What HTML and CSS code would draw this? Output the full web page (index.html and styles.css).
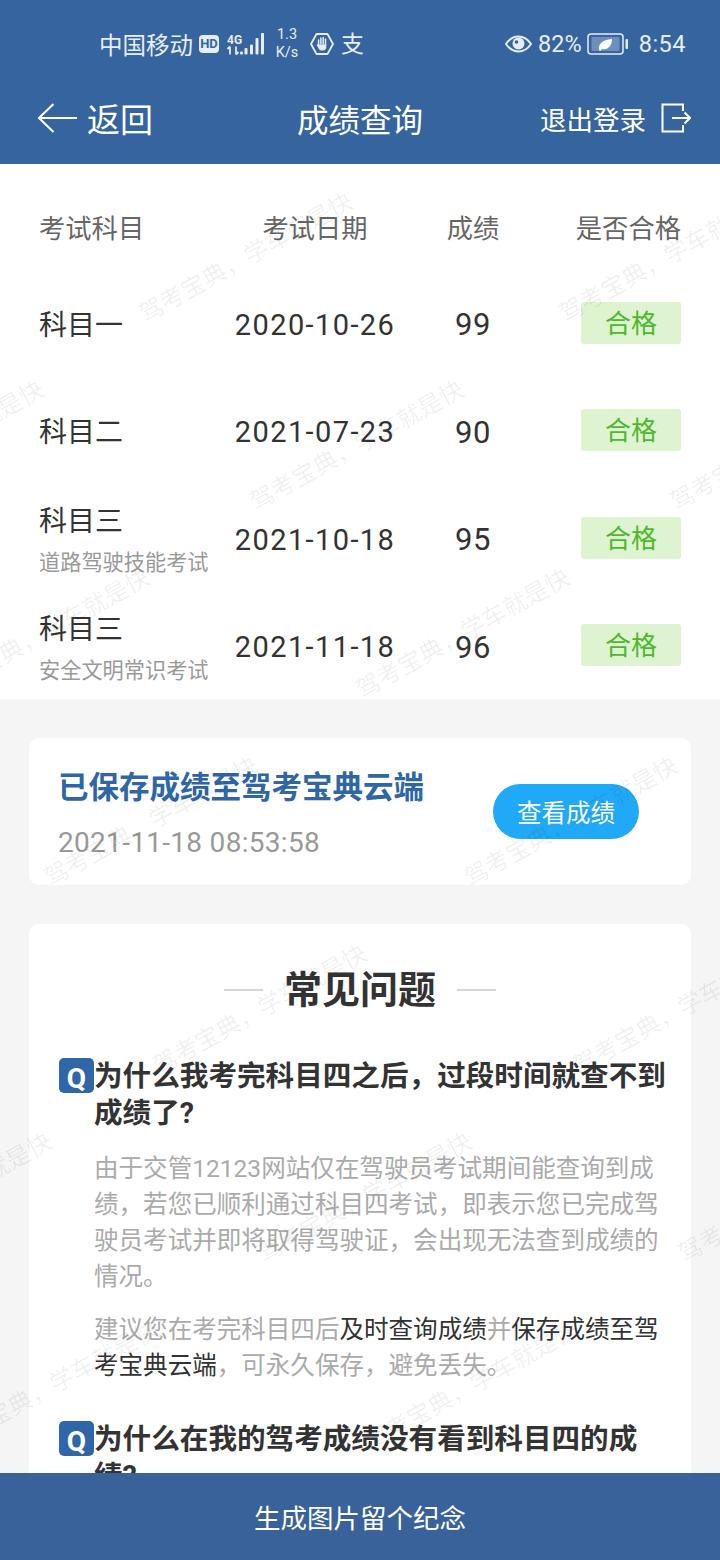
FILE: index.html
```html
<!DOCTYPE html>
<html lang="zh-CN">
<head>
    <meta charset="UTF-8">
    <title>成绩查询</title>
    <link rel="stylesheet" href="styles.css">
</head>
<body>
    <header class="top">
        <div class="status">
            <div class="status-left">
                <span class="carrier">中国移动</span>
                <span class="hd">HD</span>
                <svg class="signal" width="40" height="24" viewBox="0 0 40 24">
                    <text x="1" y="11.500" class="signal-text">4G</text>
                    <path d="M4 14.500v8M4 14.500l-2.500 2.500M10 22.500v-8M10 22.500l2.500-2.500" fill="none" stroke="#e6edf6" stroke-width="1.800"/>
                    <rect x="14" y="19.500" width="3" height="3" rx="1" fill="#e6edf6"/>
                    <rect x="18.500" y="16" width="3" height="6.500" rx="1" fill="#e6edf6"/>
                    <rect x="24" y="12.500" width="3" height="10" rx="1" fill="#e6edf6"/>
                    <rect x="29.500" y="6" width="3" height="16.500" rx="1" fill="#e6edf6"/>
                    <rect x="35" y="1" width="3" height="21.500" rx="1" fill="#e6edf6"/>
                </svg>
                <span class="speed">1.3<br>K/s</span>
                <svg class="hand" width="24" height="24" viewBox="0 0 24 24">
                    <path d="M6.500 2h11L23 12l-5.500 10h-11L1 12z" fill="none" stroke="#e6edf6" stroke-width="1.800" stroke-linejoin="round"/>
                    <path d="M8.600 8V13M10.900 6V12M13.200 5.500V12M15.500 7V13" fill="none" stroke="#e6edf6" stroke-width="1.500" stroke-linecap="round"/>
                    <path d="M7.800 12.500h8.500V15c0 2-1.400 3.500-3.500 3.500h-1.200c-1.600 0-2.500-1-3-2.300l-1.700-2.800c-.4-.9.500-1.500 .9-.9z" fill="#e6edf6"/>
                </svg>
                <span class="alipay">支</span>
            </div>
            <div class="status-right">
                <svg class="eye" width="27" height="18" viewBox="0 0 27 18">
                    <path d="M1 9c3-4.500 7-7.500 12.500-7.500S23 4.500 26 9c-3 4.500-7 7.500-12.500 7.500S4 13.500 1 9z" fill="none" stroke="#e6edf6" stroke-width="2"/>
                    <circle cx="13.500" cy="8.500" r="6" fill="#e6edf6"/>
                    <circle cx="11.500" cy="7" r="1.800" fill="#36649f"/>
                </svg>
                <span class="percent">82%</span>
                <svg class="battery" width="42" height="22" viewBox="0 0 42 22">
                    <rect x="1" y="1" width="35" height="20" rx="3" fill="none" stroke="#e6edf6" stroke-width="1.500"/>
                    <rect x="4.500" y="4" width="28" height="14" rx="1" fill="#6f8fbb"/>
                    <path d="M12 17c-1-6 3-10 13-11 0 7-4 11-10 10l-2 2z" fill="#fff"/>
                    <rect x="38.500" y="6" width="2.500" height="10" rx="1" fill="#e6edf6"/>
                </svg>
                <span class="clock">8:54</span>
            </div>
        </div>
        <nav class="nav">
            <div class="nav-back">
                <svg width="39" height="30" viewBox="0 0 39 30">
                    <path d="M15.500 1L1 15l14.500 14M1 15h38" fill="none" stroke="#fff" stroke-width="2"/>
                </svg>
                <span>返回</span>
            </div>
            <h1 class="nav-title">成绩查询</h1>
            <div class="nav-logout">
                <span>退出登录</span>
                <svg width="30" height="30" viewBox="0 0 30 30">
                    <path d="M22 8V1.500H1.500v27H22V22M11 15h18M23.500 9.500L29 15l-5.500 5.500" fill="none" stroke="#fff" stroke-width="2"/>
                </svg>
            </div>
        </nav>
    </header>

    <main class="content">
        <section class="score-table">
            <div class="score-row score-head">
                <span>考试科目</span>
                <span class="cell-center">考试日期</span>
                <span class="cell-center">成绩</span>
                <span class="cell-end">是否合格</span>
            </div>
            <div class="score-row">
                <div class="subject">科目一</div>
                <div class="cell-center date">2020-10-26</div>
                <div class="cell-center score">99</div>
                <div class="cell-end"><span class="badge">合格</span></div>
            </div>
            <div class="score-row">
                <div class="subject">科目二</div>
                <div class="cell-center date">2021-07-23</div>
                <div class="cell-center score">90</div>
                <div class="cell-end"><span class="badge">合格</span></div>
            </div>
            <div class="score-row">
                <div class="subject">科目三<small>道路驾驶技能考试</small></div>
                <div class="cell-center date">2021-10-18</div>
                <div class="cell-center score">95</div>
                <div class="cell-end"><span class="badge">合格</span></div>
            </div>
            <div class="score-row">
                <div class="subject">科目三<small>安全文明常识考试</small></div>
                <div class="cell-center date">2021-11-18</div>
                <div class="cell-center score">96</div>
                <div class="cell-end"><span class="badge">合格</span></div>
            </div>
        </section>

        <section class="card cloud">
            <div class="cloud-text">
                <h2 class="cloud-title">已保存成绩至驾考宝典云端</h2>
                <div class="cloud-time">2021-11-18 08:53:58</div>
            </div>
            <button class="cloud-btn">查看成绩</button>
        </section>

        <section class="card faq">
            <h2 class="faq-title">常见问题</h2>

            <div class="faq-item">
                <div class="faq-q"><span class="q-icon">Q</span><h3>为什么我考完科目四之后，过段时间就查不到成绩了?</h3></div>
                <p>由于交管12123网站仅在驾驶员考试期间能查询到成绩，若您已顺利通过科目四考试，即表示您已完成驾驶员考试并即将取得驾驶证，会出现无法查到成绩的情况。</p>
                <p>建议您在考完科目四后<b>及时查询成绩</b>并<b>保存成绩至驾考宝典云端</b>，可永久保存，避免丢失。</p>
            </div>

            <div class="faq-item">
                <div class="faq-q"><span class="q-icon">Q</span><h3>为什么在我的驾考成绩没有看到科目四的成绩?</h3></div>
            </div>
        </section>

        <div class="watermark">
            <div class="wm-row"><span>驾考宝典，学车就是快</span><span>驾考宝典，学车就是快</span><span>驾考宝典，学车就是快</span></div>
            <div class="wm-row"><span>驾考宝典，学车就是快</span><span>驾考宝典，学车就是快</span><span>驾考宝典，学车就是快</span></div>
            <div class="wm-row"><span>驾考宝典，学车就是快</span><span>驾考宝典，学车就是快</span><span>驾考宝典，学车就是快</span></div>
            <div class="wm-row"><span>驾考宝典，学车就是快</span><span>驾考宝典，学车就是快</span><span>驾考宝典，学车就是快</span></div>
            <div class="wm-row"><span>驾考宝典，学车就是快</span><span>驾考宝典，学车就是快</span><span>驾考宝典，学车就是快</span></div>
            <div class="wm-row"><span>驾考宝典，学车就是快</span><span>驾考宝典，学车就是快</span><span>驾考宝典，学车就是快</span></div>
            <div class="wm-row"><span>驾考宝典，学车就是快</span><span>驾考宝典，学车就是快</span><span>驾考宝典，学车就是快</span></div>
        </div>
    </main>

    <footer class="bottom">生成图片留个纪念</footer>
</body>
</html>
```

FILE: styles.css
```css
* {
    box-sizing: border-box;
}

html, body {
    margin: 0;
    height: 100%;
}

body {
    display: flex;
    flex-direction: column;
    height: 1560px;
    font-family: Roboto, "Noto Sans CJK SC", sans-serif;
    background-color: #f5f5f5;
    color: #333;
    overflow: hidden;
}

/* header */
.top {
    flex: none;
    height: 164px;
    background-color: #36649f;
    color: #fff;
}

.status {
    display: flex;
    justify-content: space-between;
    align-items: center;
    height: 88px;
    padding: 0 34px 0 99px;
    color: #e6edf6;
}

.status-left,
.status-right {
    display: flex;
    align-items: center;
}

.carrier {
    font-size: 23.5px;
    width: 100px;
}

.hd {
    width: 20px;
    height: 18px;
    line-height: 18px;
    border-radius: 4px;
    background-color: #e6edf6;
    color: #36649f;
    font-size: 13px;
    font-weight: 700;
    text-align: center;
}

.signal {
    margin-left: 7px;
}

.signal-text {
    font-family: Roboto, sans-serif;
    font-size: 12px;
    font-weight: 700;
    fill: #e6edf6;
}

.speed {
    width: 24px;
    margin-left: 9px;
    font-size: 14.5px;
    line-height: 18px;
    text-align: center;
}

.hand {
    margin-left: 11px;
}

.alipay {
    margin: 2px 0 0 7px;
    font-size: 23px;
    line-height: 24px;
}

.percent {
    margin-left: 6px;
    font-size: 23.5px;
}

.battery {
    margin-left: 5px;
}

.clock {
    margin-left: 10px;
    font-size: 23.5px;
    letter-spacing: 0.5px;
}

.nav {
    display: grid;
    grid-template-columns: 1fr auto 1fr;
    align-items: center;
    height: 60px;
    padding: 0 29px 0 38px;
}

.nav-back {
    display: flex;
    align-items: center;
    gap: 10px;
    font-size: 33px;
}

.nav-title {
    margin: 0 9px 0 0;
    font-size: 31.500px;
    font-weight: 400;
}

.nav-logout {
    display: flex;
    justify-content: flex-end;
    align-items: center;
    gap: 15px;
    font-size: 26.500px;
}

/* main area */
.content {
    position: relative;
    flex: 1;
    min-height: 0;
    overflow: hidden;
}

.score-table {
    height: 535px;
    padding: 10px 39px 0;
    background-color: #fff;
}

.score-row {
    display: grid;
    grid-template-columns: 170px 212px 104px 156px;
    align-items: center;
    height: 107.500px;
}

.score-head {
    height: 97px;
    padding-top: 8px;
    font-size: 26.300px;
    color: #666;
}

.cell-center {
    text-align: center;
}

.cell-end {
    text-align: right;
}

.subject {
    margin-top: 2px;
    font-size: 28px;
    line-height: 40px;
}

.subject small {
    display: block;
    font-size: 21.200px;
    line-height: 32px;
    margin-top: 5px;
    color: #999;
}

.date {
    font-size: 29px;
    letter-spacing: 1.400px;
}

.score {
    font-size: 31px;
    letter-spacing: 0.500px;
}

.badge {
    display: inline-block;
    width: 100px;
    height: 42px;
    line-height: 44px;
    margin-bottom: 4px;
    border-radius: 3px;
    background-color: #def3d0;
    color: #4cb82e;
    font-size: 26px;
    text-align: center;
    vertical-align: middle;
}

.card {
    margin: 0 29px;
    border-radius: 10px;
    background-color: #fff;
}

.cloud {
    display: flex;
    justify-content: space-between;
    align-items: center;
    height: 147px;
    margin-top: 39px;
    padding: 0 52px 0 29px;
}

.cloud-text {
    padding-top: 8px;
}

.cloud-title {
    margin: 0;
    font-size: 30.500px;
    font-weight: 700;
    line-height: 40px;
    color: #2e66a6;
}

.cloud-time {
    margin-top: 15px;
    font-size: 28px;
    line-height: 40px;
    letter-spacing: 0.300px;
    color: #999;
}

.cloud-btn {
    width: 146px;
    height: 55px;
    padding: 0;
    border: 0;
    border-radius: 28px;
    background-color: #1fa9f7;
    color: #fff;
    font-family: inherit;
    font-size: 24.500px;
}

.faq {
    margin-top: 39px;
    padding: 40px 21px 0 30px;
    height: 700px;
}

.faq-title {
    display: flex;
    justify-content: center;
    align-items: center;
    gap: 21px;
    margin: 0 0 42px -9px;
    font-size: 38px;
    line-height: 52px;
    font-weight: 700;
}

.faq-title::before,
.faq-title::after {
    content: "";
    width: 39px;
    height: 2px;
    background-color: #d5d5d5;
}

.faq-item {
    margin-bottom: 37px;
}

.faq-q {
    display: flex;
    align-items: flex-start;
}

.faq-q h3 {
    margin: 0;
    font-size: 28.600px;
    font-weight: 700;
    line-height: 37px;
}

.q-icon {
    flex: none;
    width: 35px;
    height: 35px;
    padding-top: 5px;
    border-radius: 5px;
    background-color: #2f66a8;
    color: #fff;
    font-size: 28px;
    font-weight: 700;
    line-height: 32px;
    text-align: center;
}

.faq-item p {
    margin: 0 0 17px 35px;
    font-size: 24.560px;
    line-height: 36px;
    color: #aaa;
}

.faq-item .faq-q + p {
    margin-top: 19px;
}

.faq-item p b {
    font-weight: 400;
    color: #333;
}

/* watermark lies over everything in the scroll area */
.watermark {
    position: absolute;
    top: 0;
    left: 0;
    right: 0;
    bottom: 0;
    padding-top: 58px;
    overflow: hidden;
    pointer-events: none;
}

.wm-row {
    display: flex;
    align-items: center;
    height: 188px;
}

.wm-row:nth-child(1) { margin-left: -279px; }
.wm-row:nth-child(2) { margin-left: -168px; }
.wm-row:nth-child(3) { margin-left: -62px; }
.wm-row:nth-child(4) { margin-left: 46px; }
.wm-row:nth-child(5) { margin-left: -265px; }
.wm-row:nth-child(6) { margin-left: -160px; }
.wm-row:nth-child(7) { margin-left: -53px; }

.wm-row span {
    flex: none;
    width: 420px;
    font-size: 24px;
    line-height: 30px;
    white-space: nowrap;
    color: rgba(0, 0, 0, 0.065);
    transform: rotate(-29deg);
    transform-origin: left center;
}

.bottom {
    flex: none;
    height: 87px;
    padding-top: 2px;
    line-height: 87px;
    background-color: #386299;
    color: #fff;
    font-size: 26.500px;
    text-align: center;
}
```
